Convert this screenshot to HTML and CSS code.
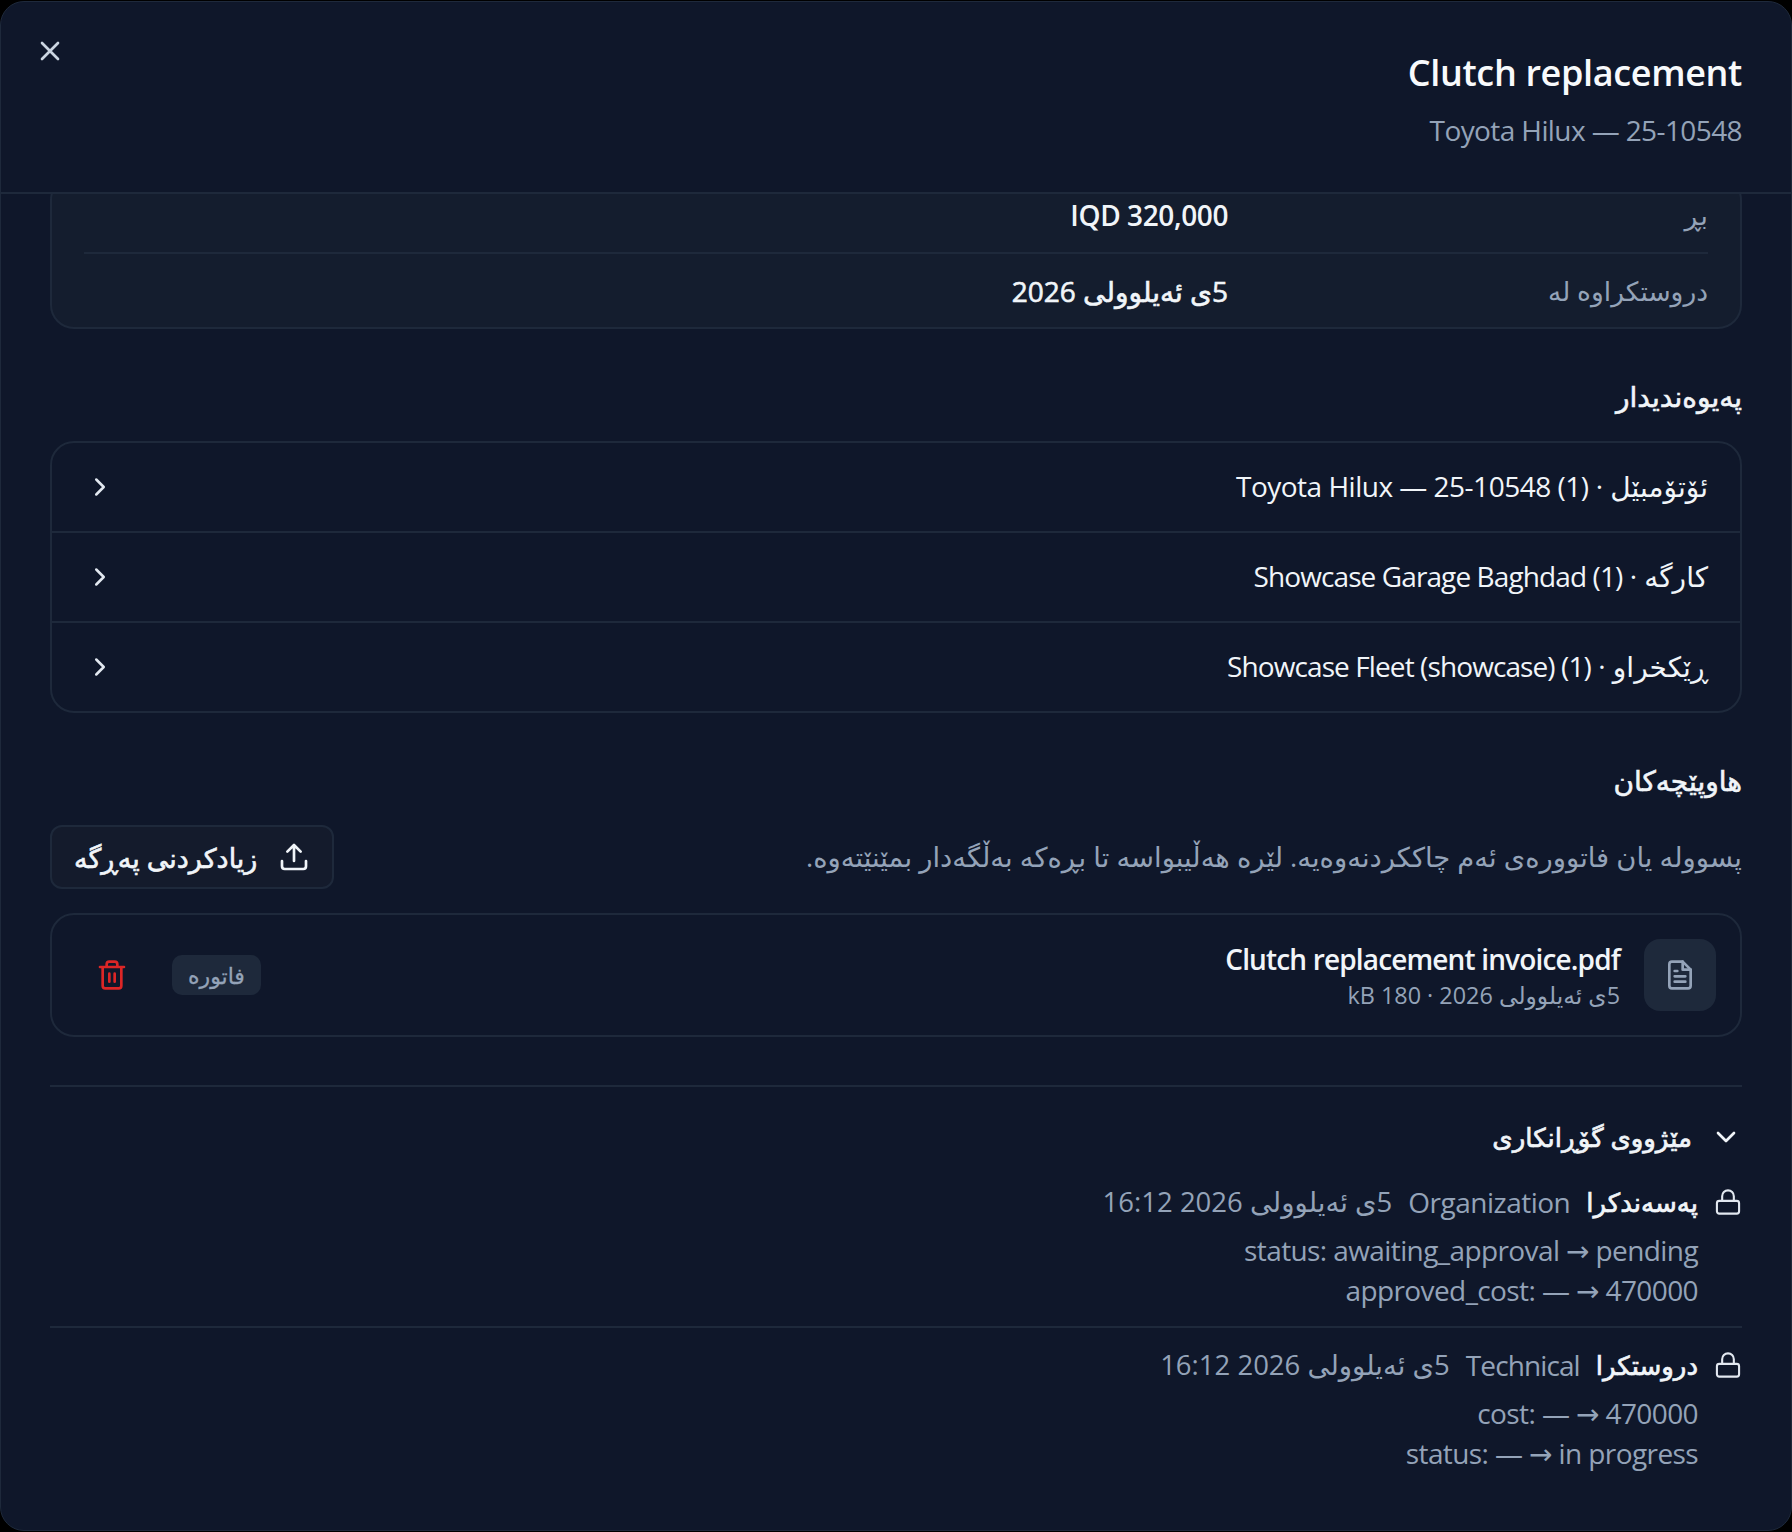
FILE: index.html
```html
<!DOCTYPE html>
<html lang="ckb" dir="rtl">
<head>
    <meta charset="UTF-8">
    <title>Clutch replacement</title>
    <link rel="stylesheet" href="styles.css">
</head>
<body>
    <div class="modal">
        <header class="modal-head">
            <div>
                <h1 dir="ltr">Clutch replacement</h1>
                <p class="subtitle">Toyota Hilux — 25-10548</p>
            </div>
            <button class="close">
                <svg viewBox="0 0 24 24" width="32" height="32"><path d="M18 6 6 18M6 6l12 12"/></svg>
            </button>
        </header>

        <div class="modal-body">
            <div class="facts">
                <div class="fact">
                    <span class="fact-label">بڕ</span>
                    <strong class="amount">IQD 320,000</strong>
                </div>
                <div class="fact">
                    <span class="fact-label">دروستکراوە لە</span>
                    <strong>5ی ئەیلوولی <span class="en">2026</span></strong>
                </div>
            </div>

            <h2>پەیوەندیدار</h2>
            <div class="links">
                <div class="link-row">
                    <span>ئۆتۆمبێل · <span class="en">Toyota Hilux — 25-10548 (1)</span></span>
                    <svg class="chev" viewBox="0 0 24 24" width="30" height="30"><path d="m9 18 6-6-6-6"/></svg>
                </div>
                <div class="link-row">
                    <span>کارگە · <span class="en tight">Showcase Garage Baghdad (1)</span></span>
                    <svg class="chev" viewBox="0 0 24 24" width="30" height="30"><path d="m9 18 6-6-6-6"/></svg>
                </div>
                <div class="link-row">
                    <span>ڕێکخراو · <span class="en tight">Showcase Fleet (showcase) (1)</span></span>
                    <svg class="chev" viewBox="0 0 24 24" width="30" height="30"><path d="m9 18 6-6-6-6"/></svg>
                </div>
            </div>

            <h2 class="attach-title">هاوپێچەکان</h2>
            <div class="attach-bar">
                <p>پسووله یان فاتوورەی ئەم چاککردنەوەیە. لێرە هەڵیبواسە تا بڕەکە بەڵگەدار بمێنێتەوە.</p>
                <button class="upload">
                    <svg viewBox="0 0 24 24" width="32" height="32"><path d="M12 15V3M7 8l5-5 5 5M3 15v4a2 2 0 0 0 2 2h14a2 2 0 0 0 2-2v-4"/></svg>
                    زیادکردنی پەڕگە
                </button>
            </div>

            <div class="file">
                <div class="file-icon">
                    <svg viewBox="0 0 24 24" width="32" height="32"><path d="M14 2H6a2 2 0 0 0-2 2v16a2 2 0 0 0 2 2h12a2 2 0 0 0 2-2V8z"/><path d="M14 2v6h6M8 13h8M8 17h8M8 9h2"/></svg>
                </div>
                <div class="file-info">
                    <strong dir="ltr">Clutch replacement invoice.pdf</strong>
                    <span>5ی ئەیلوولی <span class="en">2026</span> · 180 kB</span>
                </div>
                <span class="badge">فاتورە</span>
                <button class="trash">
                    <svg viewBox="0 0 24 24" width="32" height="32"><path d="M3 6h18M19 6v14a2 2 0 0 1-2 2H7a2 2 0 0 1-2-2V6M8 6V4a2 2 0 0 1 2-2h4a2 2 0 0 1 2 2v2M10 11v6M14 11v6"/></svg>
                </button>
            </div>

            <div class="history">
                <div class="history-head">
                    <svg viewBox="0 0 24 24" width="32" height="32"><path d="m6 9 6 6 6-6"/></svg>
                    <h3>مێژووی گۆڕانکاری</h3>
                </div>

                <div class="event">
                    <div class="event-line">
                        <svg class="lock" viewBox="0 0 24 24" width="28" height="28"><rect x="2.5" y="11" width="19" height="11" rx="2"/><path d="M7 11V7a5 5 0 0 1 10 0v4"/></svg>
                        <strong>پەسەندکرا</strong>
                        <span class="en">Organization</span>
                        <span class="when">5ی ئەیلوولی <span class="en">2026 16:12</span></span>
                    </div>
                    <div class="change" dir="ltr">status: awaiting_approval → pending</div>
                    <div class="change" dir="ltr">approved_cost: — → 470000</div>
                </div>

                <div class="event">
                    <div class="event-line">
                        <svg class="lock" viewBox="0 0 24 24" width="28" height="28"><rect x="2.5" y="11" width="19" height="11" rx="2"/><path d="M7 11V7a5 5 0 0 1 10 0v4"/></svg>
                        <strong>دروستکرا</strong>
                        <span class="en tight">Technical</span>
                        <span class="when">5ی ئەیلوولی <span class="en">2026 16:12</span></span>
                    </div>
                    <div class="change" dir="ltr">cost: — → 470000</div>
                    <div class="change" dir="ltr">status: — → in progress</div>
                </div>
            </div>
        </div>
    </div>
</body>
</html>
```

FILE: styles.css
```css
html, body {
    margin: 0;
    height: 100%;
    background-color: #000;
}
body {
    font-family: "Open Sans", "DejaVu Sans", sans-serif;
    font-size: 28px;
    color: #f1f5f9;
    overflow: hidden;
}
h1, h2, h3, p {
    margin: 0;
}
button {
    font: inherit;
    background: none;
    border: 0;
    padding: 0;
    color: inherit;
}
svg {
    display: block;
    fill: none;
    stroke: currentColor;
    stroke-width: 2;
    stroke-linecap: round;
    stroke-linejoin: round;
}
.en {
    letter-spacing: -0.5px;
}
.en.tight {
    letter-spacing: -0.9px;
}
.modal {
    box-sizing: border-box;
    height: 1530px;
    margin-top: 1px;
    background-color: #0f172a;
    border: 1px solid #1e293b;
    border-radius: 24px;
    overflow: hidden;
    display: flex;
    flex-direction: column;
}
.modal-head {
    position: relative;
    box-sizing: border-box;
    height: 192px;
    flex: none;
    padding: 51px 49px 0;
    border-bottom: 2px solid #1e293b;
}
.modal-head h1 {
    font-size: 36px;
    font-weight: 600;
    line-height: 40px;
    letter-spacing: -0.35px;
    color: #f8fafc;
    text-align: right;
    direction: rtl;
}
.subtitle {
    margin-top: 19px;
    color: #94a3b8;
    line-height: 36px;
    letter-spacing: -0.6px;
}
.close {
    position: absolute;
    left: 33px;
    top: 33px;
    color: #cbd5e1;
}
.modal-body {
    flex: 1;
    overflow: hidden;
    padding: 0 49px;
}
.facts {
    margin-top: -18px;
    background-color: #141d2e;
    border: 2px solid #1e293b;
    border-radius: 24px;
    padding: 0 32px;
}
.fact {
    display: flex;
    height: 74px;
    align-items: center;
    border-bottom: 2px solid #1e293b;
}
.fact:last-child {
    height: 73px;
    border-bottom: 0;
}
.fact-label {
    width: 480px;
    font-size: 26.5px;
    color: #94a3b8;
}
.fact strong {
    font-weight: 400;
    -webkit-text-stroke: 0.6px currentColor;
}
.fact .amount {
    font-weight: 600;
    letter-spacing: -0.4px;
    -webkit-text-stroke: 0;
}
h2 {
    margin-top: 47px;
    font-size: 28px;
    font-weight: 400;
    line-height: 40px;
    -webkit-text-stroke: 0.6px currentColor;
}
.links {
    margin-top: 25px;
    border: 2px solid #1e293b;
    border-radius: 24px;
}
.link-row {
    display: flex;
    justify-content: space-between;
    align-items: center;
    height: 88px;
    padding: 0 32px 0 33px;
    border-bottom: 2px solid #1e293b;
}
.link-row > span {
    margin-bottom: 2px;
}
.link-row:last-child {
    border-bottom: 0;
}
.chev {
    color: #e2e8f0;
}
.attach-title {
    margin-top: 47px;
}
.attach-bar {
    display: flex;
    justify-content: space-between;
    align-items: center;
    margin-top: 25px;
}
.attach-bar p {
    margin-bottom: 2px;
    font-size: 27.4px;
    color: #94a3b8;
}
.upload {
    display: flex;
    align-items: center;
    gap: 21px;
    height: 64px;
    padding: 0 22px;
    font-size: 27px;
    font-weight: 400;
    -webkit-text-stroke: 0.6px currentColor;
    background-color: #141b2c;
    border: 2px solid #1e293b;
    border-radius: 12px;
}
.file {
    display: flex;
    align-items: center;
    margin-top: 24px;
    height: 124px;
    box-sizing: border-box;
    padding: 0 24px;
    border: 2px solid #1e293b;
    border-radius: 24px;
}
.file-icon {
    width: 72px;
    height: 72px;
    display: flex;
    align-items: center;
    justify-content: center;
    color: #94a3b8;
    background-color: #1e293b;
    border-radius: 16px;
}
.file-info {
    flex: 1;
    margin-right: 24px;
    display: flex;
    flex-direction: column;
}
.file-info strong {
    font-weight: 600;
    line-height: 40px;
    letter-spacing: -0.85px;
    text-align: right;
    direction: rtl;
}
.file-info span {
    font-size: 23.4px;
    line-height: 32px;
    color: #94a3b8;
}
.badge {
    padding: 0 16px;
    height: 40px;
    line-height: 40px;
    font-size: 22px;
    color: #94a3b8;
    -webkit-text-stroke: 0.3px currentColor;
    background-color: #1e293b;
    border-radius: 10px;
}
.trash {
    margin: 0 44px 0 20px;
    color: #dc2626;
}
.history {
    margin-top: 48px;
    border-top: 2px solid #1e293b;
}
.history-head {
    display: flex;
    align-items: center;
    gap: 18px;
    margin-top: 32px;
    margin-bottom: 25px;
}
h3 {
    font-size: 26px;
    font-weight: 400;
    -webkit-text-stroke: 0.7px currentColor;
}
.event {
    padding-bottom: 16px;
    border-bottom: 2px solid #1e293b;
}
.event:last-child {
    border-bottom: 0;
}
.event-line {
    display: flex;
    align-items: center;
    gap: 16px;
    margin-top: 15px;
    margin-bottom: 6px;
    color: #94a3b8;
    line-height: 44px;
}
.event-line strong {
    font-size: 26px;
    color: #f1f5f9;
    font-weight: 400;
    -webkit-text-stroke: 0.7px currentColor;
}
.when {
    font-size: 27.5px;
}
.lock {
    color: #e2e8f0;
    stroke-width: 1.8;
}
.change {
    margin-right: 44px;
    color: #94a3b8;
    line-height: 40px;
    letter-spacing: -0.6px;
    text-align: right;
    direction: rtl;
}
```
